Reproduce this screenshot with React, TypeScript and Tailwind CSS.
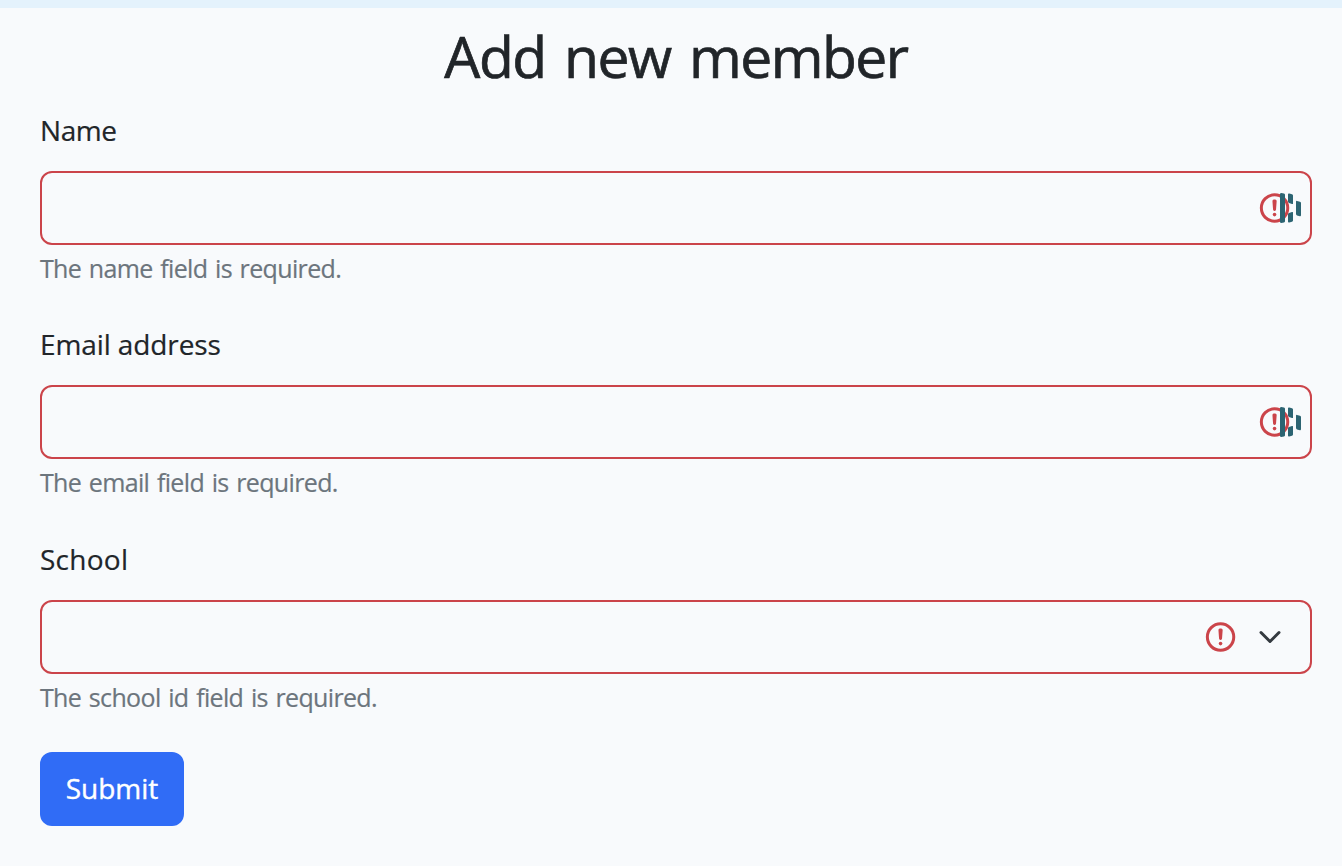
import React from "react";

function ErrorIcon() {
  return (
    <svg viewBox="0 0 12 12" className="h-[36px] w-[36px] shrink-0" fill="none" stroke="#cb444a">
      <circle cx="5.85" cy="6" r="4.4" />
      <path strokeLinejoin="round" d="M5.65 3.7h.4L5.85 6.5z" />
      <circle cx="5.85" cy="8.2" r=".6" fill="#cb444a" stroke="none" />
    </svg>
  );
}

function ManagerIcon() {
  return (
    <svg viewBox="0 0 22 30" className="absolute top-[20px] right-[8px] h-[30px] w-[22px]" fill="#2c6472">
      <path d="M0 1.2Q0 0 1.2 0L4 .6Q5 .8 5 1.8V28.2Q5 29.2 4 29.4L1.2 30Q0 30 0 28.8Z" />
      <path d="M8 1.4Q8 .2 9.2 .5L12 1.3Q13 1.6 13 2.6V10.5Q13 11.4 12 11L9 10Q8 9.6 8 8.6Z" />
      <path d="M8 21.4Q8 20.4 9 20L12 19Q13 18.6 13 19.5V27.4Q13 28.4 12 28.7L9.2 29.5Q8 29.8 8 28.6Z" />
      <path d="M16 8.8Q16 7.6 17 7.9L20 8.7Q21 9 21 10V22Q21 23.4 20 23.2L17 22.4Q16 22.1 16 21.1Z" />
    </svg>
  );
}

type FieldProps = {
  label: string;
  help: string;
  labelClass: string;
  select?: boolean;
};

function Field({ label, help, labelClass, select }: FieldProps) {
  return (
    <div>
      <label className="block h-[62px] text-[28px] leading-[43px] [-webkit-text-stroke:0.2px]">
        <span className={labelClass}>{label}</span>
      </label>
      <div
        className={`relative flex h-[74px] items-center justify-end rounded-[12px] border-2 border-[#cb444a] ${select ? "pr-[28px]" : "pr-[17px]"}`}
      >
        <ErrorIcon />
        {select ? (
          <svg viewBox="0 0 16 16" className="ml-[19px] h-[24px] w-[24px]" fill="none" stroke="#343a40" strokeWidth="2" strokeLinecap="round" strokeLinejoin="round">
            <path d="m2 5 6 6 6-6" />
          </svg>
        ) : (
          <ManagerIcon />
        )}
      </div>
      <p className="h-[46px] pt-[3px] text-[25px] leading-[40px] tracking-[-0.65px] [word-spacing:1.8px] text-[#6c757d] [-webkit-text-stroke:0.2px]">
        {help}
      </p>
    </div>
  );
}

export default function App() {
  return (
    <main className="h-[866px] border-t-8 border-[#e4f2fc] bg-[#f8fafc] pr-[30px] pl-[40px] font-['Open_Sans','Noto_Sans',sans-serif] text-[#212529]">
      <h1 className="h-[101px] text-center text-[57px] leading-[97px] tracking-[-1.5px] [word-spacing:5px] [-webkit-text-stroke:0.7px]">
        Add new member
      </h1>
      <form className="flex flex-col" onSubmit={(e) => e.preventDefault()}>
        <div className="mb-[32px]">
          <Field label="Name" help="The name field is required." labelClass="tracking-[-0.4px]" />
        </div>
        <div className="mb-[33px]">
          <Field label="Email address" help="The email field is required." labelClass="tracking-[-0.1px]" />
        </div>
        <Field label="School" help="The school id field is required." labelClass="tracking-[0.25px]" select />
        <button className="mt-[32px] h-[74px] w-[144px] rounded-[12px] bg-[#306cf6] pb-[3px] text-[28px] text-white [-webkit-text-stroke:0.4px]">
          Submit
        </button>
      </form>
    </main>
  );
}
